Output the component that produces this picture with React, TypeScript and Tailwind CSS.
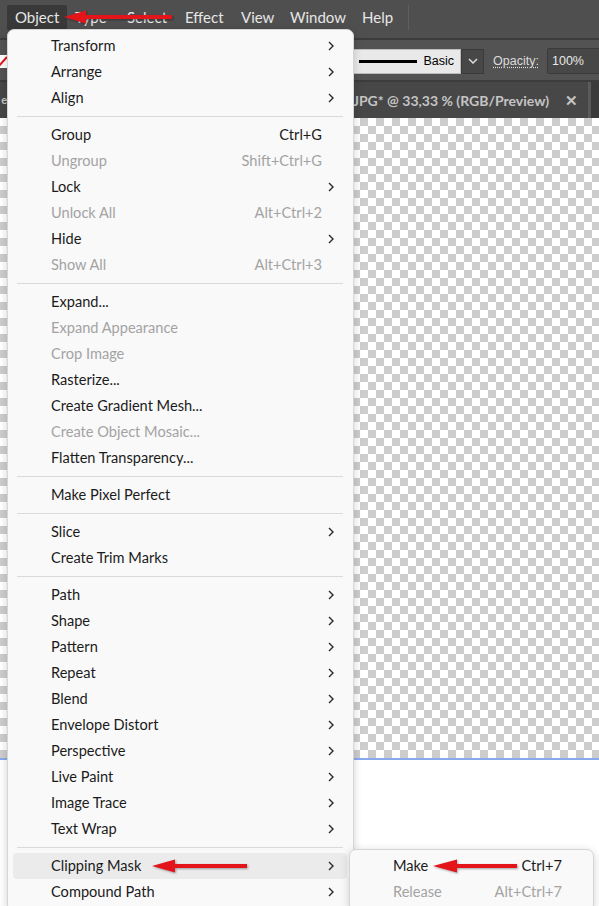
import React from "react";

type Row =
  | { sep: true }
  | { label: string; shortcut?: string; sub?: boolean; disabled?: boolean; hl?: boolean };

const items: Row[] = [
  { label: "Transform", sub: true },
  { label: "Arrange", sub: true },
  { label: "Align", sub: true },
  { sep: true },
  { label: "Group", shortcut: "Ctrl+G" },
  { label: "Ungroup", shortcut: "Shift+Ctrl+G", disabled: true },
  { label: "Lock", sub: true },
  { label: "Unlock All", shortcut: "Alt+Ctrl+2", disabled: true },
  { label: "Hide", sub: true },
  { label: "Show All", shortcut: "Alt+Ctrl+3", disabled: true },
  { sep: true },
  { label: "Expand..." },
  { label: "Expand Appearance", disabled: true },
  { label: "Crop Image", disabled: true },
  { label: "Rasterize..." },
  { label: "Create Gradient Mesh..." },
  { label: "Create Object Mosaic...", disabled: true },
  { label: "Flatten Transparency..." },
  { sep: true },
  { label: "Make Pixel Perfect" },
  { sep: true },
  { label: "Slice", sub: true },
  { label: "Create Trim Marks" },
  { sep: true },
  { label: "Path", sub: true },
  { label: "Shape", sub: true },
  { label: "Pattern", sub: true },
  { label: "Repeat", sub: true },
  { label: "Blend", sub: true },
  { label: "Envelope Distort", sub: true },
  { label: "Perspective", sub: true },
  { label: "Live Paint", sub: true },
  { label: "Image Trace", sub: true },
  { label: "Text Wrap", sub: true },
  { sep: true },
  { label: "Clipping Mask", sub: true, hl: true },
  { label: "Compound Path", sub: true },
];

const subItems: Row[] = [
  { label: "Make", shortcut: "Ctrl+7" },
  { label: "Release", shortcut: "Alt+Ctrl+7", disabled: true },
];

function Chevron() {
  return (
    <svg width="6" height="10" viewBox="0 0 6 10">
      <path d="M1 1 L5 5 L1 9" fill="none" stroke="#2a2a2a" strokeWidth="1.4" />
    </svg>
  );
}

function MenuRows({ rows }: { rows: Row[] }) {
  return (
    <>
      {rows.map((r, i) =>
        "sep" in r ? (
          <div key={i} className="h-[11px] flex items-center pl-[9px] pr-[10px]">
            <div className="h-px w-full bg-[#dadada]" />
          </div>
        ) : (
          <div
            key={i}
            className={
              "ml-[5px] mr-[6px] h-[26px] flex items-center pl-[38px] rounded-[4px] " +
              (r.hl ? "bg-[#ebebeb] " : "") +
              (r.disabled ? "text-[#a3a3a3]" : "text-[#1b1b1b]")
            }
          >
            <span className="flex-1 whitespace-nowrap pb-[1px]">{r.label}</span>
            {r.shortcut && <span className="whitespace-nowrap pb-[1px]">{r.shortcut}</span>}
            <div className="w-[25px] flex items-center pl-[6px]">{r.sub && <Chevron />}</div>
          </div>
        )
      )}
    </>
  );
}

function Arrow({ left, top, width, head }: { left: number; top: number; width: number; head: number }) {
  return (
    <svg
      className="absolute drop-shadow-[1px_1px_1px_rgba(0,0,0,0.35)]"
      style={{ left, top }}
      width={width}
      height={16}
      viewBox={`0 0 ${width} 16`}
    >
      <polygon points={`0,8 ${head},1.5 ${head},14.5`} fill="#e3151b" />
      <rect x={head - 1} y={6} width={width - head + 1} height={4} fill="#e3151b" />
    </svg>
  );
}

export default function App() {
  return (
    <div className="relative w-[599px] h-[906px] overflow-hidden bg-white flex flex-col font-['Lato','Open_Sans',sans-serif]">
      {/* Menu bar */}
      <div className="h-[38px] shrink-0 bg-[#4f4f4f] flex items-center pb-[3px] text-[15px] text-[#e6e6e6]">
        <div className="ml-[7px] w-[60px] h-[25px] bg-[#393939] rounded-[2px] pl-[8px] flex items-center">Object</div>
        <div className="w-[52px] pl-[8px]">Type</div>
        <div className="w-[58px] pl-[8px]">Select</div>
        <div className="w-[56px] pl-[8px]">Effect</div>
        <div className="w-[49px] pl-[8px]">View</div>
        <div className="w-[72px] pl-[8px]">Window</div>
        <div className="w-[54px] pl-[8px]">Help</div>
        <div className="w-px h-[25px] bg-[#5e5e5e]" />
      </div>
      <div className="h-[2px] shrink-0 bg-[#3c3c3c]" />
      {/* Control bar */}
      <div className="h-[40px] shrink-0 bg-[#535353] flex items-center pt-[2px] overflow-hidden text-[13px]">
        <div className="w-[7px] h-[13px] bg-white shrink-0 overflow-hidden">
          <svg width="7" height="13" viewBox="0 0 7 13">
            <line x1="-2" y1="12" x2="7" y2="2" stroke="#e3151b" strokeWidth="2" />
          </svg>
        </div>
        <div className="w-[326px] shrink-0" />
        <div className="w-[128px] h-[25px] shrink-0 bg-[#e9e9e9] flex items-center pl-[25px] pr-[6px] border border-[#bdbdbd]">
          <div className="w-[63px] h-[3px] bg-black" />
          <span className="ml-[6px] text-black font-['Liberation_Sans',sans-serif] text-[12.5px]">Basic</span>
        </div>
        <div className="w-[23px] h-[25px] shrink-0 bg-[#474747] border border-[#3a3a3a] flex items-center justify-center">
          <svg width="10" height="6" viewBox="0 0 10 6">
            <path d="M1 1 L5 5 L9 1" fill="none" stroke="#dcdcdc" strokeWidth="1.5" />
          </svg>
        </div>
        <div className="ml-[9px] w-[47px] shrink-0 text-[#dcdcdc] underline decoration-dotted underline-offset-2 font-['Liberation_Sans',sans-serif] text-[12.5px]">
          Opacity:
        </div>
        <div className="ml-[7px] w-[70px] h-[26px] shrink-0 bg-[#474747] border border-[#3b3b3b] rounded-[2px] flex items-center pl-[4px] text-[#e8e8e8] font-['Liberation_Sans',sans-serif] text-[12.5px]">
          100%
        </div>
      </div>
      <div className="h-[2px] shrink-0 bg-[#3c3c3c]" />
      {/* Tab bar */}
      <div className="h-[36px] shrink-0 bg-[#3b3b3b] flex">
        <div className="w-[7px] bg-[#474747] overflow-hidden flex justify-end items-center text-[11px] font-bold text-[#c4c4c4]">
          <span>e</span>
        </div>
        <div className="w-[581px] bg-[#474747] flex justify-end items-center pr-[10px] text-[14px] font-bold text-[#c4c4c4] overflow-hidden border-l border-[#3b3b3b]">
          <span className="whitespace-nowrap">IMG_2023.JPG* @ 33,33 % (RGB/Preview)</span>
          <span className="ml-[16px] text-[15px]">✕</span>
        </div>
        <div className="w-[3px] bg-[#5a5a5a]" />
      </div>
      {/* Canvas */}
      <div className="h-[640px] shrink-0 bg-[repeating-conic-gradient(#cdcdcd_0_25%,#ffffff_0_50%)] bg-[length:16px_16px]" />
      <div className="h-[2px] shrink-0 bg-[#8aaaf0]" />
      <div className="flex-1 bg-white" />

      {/* Object menu */}
      <div className="absolute left-[7px] top-[29px] w-[347px] pt-[3px] pb-[6px] bg-[#f9f9f9] border border-[#d6d6d6] rounded-[7px] shadow-[0_2px_8px_rgba(0,0,0,0.18)] text-[14.6px]">
        <MenuRows rows={items} />
      </div>

      {/* Submenu */}
      <div className="absolute left-[349px] top-[849px] w-[245px] pt-[3px] pb-[6px] bg-[#f9f9f9] border border-[#d6d6d6] rounded-[7px] shadow-[0_2px_8px_rgba(0,0,0,0.18)] text-[14.6px]">
        <MenuRows rows={subItems} />
      </div>

      {/* Red arrows */}
      <Arrow left={64} top={9} width={108} head={22} />
      <Arrow left={152} top={858} width={95} head={23} />
      <Arrow left={433} top={858} width={84} head={24} />
    </div>
  );
}
